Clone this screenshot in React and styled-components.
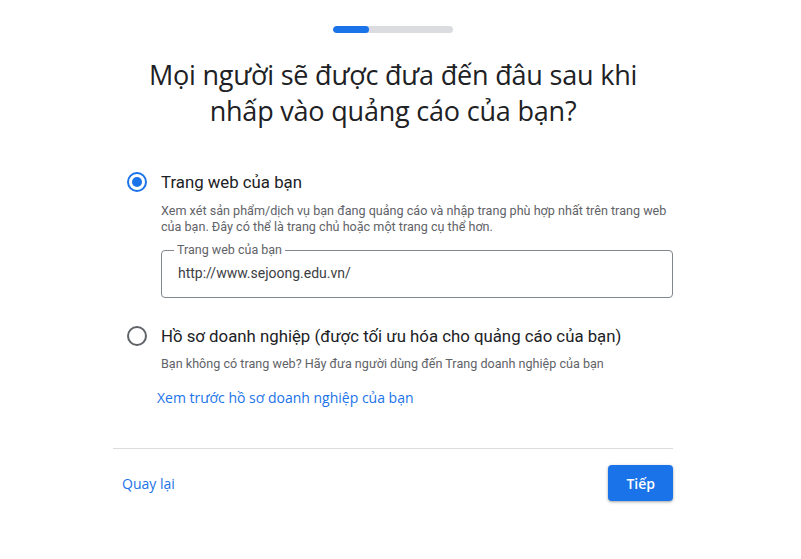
import React, { useState } from "react";
import styled, { createGlobalStyle } from "styled-components";

const GlobalStyle = createGlobalStyle`
  html, body {
    margin: 0;
    padding: 0;
    background: #fff;
  }
  body {
    font-family: Roboto, "Liberation Sans", Arial, sans-serif;
    color: #202124;
  }
`;

const Page = styled.div`
  width: 801px;
  height: 559px;
  display: flex;
  flex-direction: column;
  align-items: flex-start;
  padding-left: 113px;
  box-sizing: border-box;
`;

const Wrap = styled.div`
  width: 560px;
  display: flex;
  flex-direction: column;
`;

const Progress = styled.div`
  align-self: center;
  width: 120px;
  height: 7px;
  border-radius: 4px;
  background: #dadce0;
  margin-top: 26px;
  overflow: hidden;
  div {
    height: 100%;
    background: #1a73e8;
    border-radius: 4px;
  }
`;

const Title = styled.h1`
  margin: 24px 0 0;
  font-family: "Open Sans", Roboto, sans-serif;
  font-weight: 400;
  font-size: 27px;
  line-height: 36px;
  text-align: center;
  color: #202124;
  letter-spacing: -0.2px;
`;

const Options = styled.div`
  margin-top: 41px;
  padding-left: 14px;
  display: flex;
  flex-direction: column;
`;

const Option = styled.label`
  display: grid;
  grid-template-columns: 34px 1fr;
  align-items: center;
  cursor: pointer;
  margin-top: ${(p) => p.$gap || 0}px;
`;

const Radio = styled.span`
  width: 20px;
  height: 20px;
  box-sizing: border-box;
  border-radius: 50%;
  border: 2px solid ${(p) => (p.$on ? "#1a73e8" : "#5f6368")};
  display: flex;
  align-items: center;
  justify-content: center;
  &::after {
    content: "";
    width: 10px;
    height: 10px;
    border-radius: 50%;
    background: ${(p) => (p.$on ? "#1a73e8" : "transparent")};
  }
`;

const OptionLabel = styled.span`
  font-size: 16.8px;
  line-height: 24px;
  color: #202124;
`;

const Body = styled.div`
  padding-left: 34px;
`;

const Hint = styled.p`
  margin: ${(p) => p.$top}px 0 0;
  font-size: 12.6px;
  line-height: 16px;
  color: #5f6368;
`;

const Field = styled.fieldset`
  margin: 9px 0 0;
  padding: 0 16px;
  height: 54px;
  box-sizing: border-box;
  border: 1px solid #80868b;
  border-radius: 4px;
  legend {
    padding: 0 3px;
    margin-left: -4px;
    font-size: 12.5px;
    line-height: 12px;
    color: #5f6368;
  }
  input {
    border: 0;
    outline: 0;
    width: 100%;
    padding: 9px 0 0;
    font-family: Roboto, sans-serif;
    font-size: 14px;
    color: #3c4043;
    background: transparent;
  }
`;

const TextLink = styled.a`
  font-family: "Open Sans", Roboto, sans-serif;
  font-size: 14px;
  font-weight: ${(p) => p.$weight || 400};
  color: #1a73e8;
  text-decoration: none;
  cursor: pointer;
`;

const Preview = styled.div`
  margin-top: 16px;
  padding-left: 30px;
`;

const Divider = styled.hr`
  margin: 41px 0 0;
  border: 0;
  border-top: 1px solid #dadce0;
`;

const Footer = styled.div`
  display: flex;
  justify-content: space-between;
  align-items: center;
  padding: 16px 0 0 9px;
`;

const NextButton = styled.button`
  height: 36px;
  padding: 0 18px;
  border: 0;
  border-radius: 4px;
  background: #1a73e8;
  color: #fff;
  font-family: "Open Sans", Roboto, sans-serif;
  font-weight: 600;
  font-size: 14px;
  box-shadow: 0 1px 2px rgba(60, 64, 67, 0.3), 0 1px 3px 1px rgba(60, 64, 67, 0.15);
  cursor: pointer;
`;

export default function App() {
  const [choice, setChoice] = useState("web");
  const [url, setUrl] = useState("http://www.sejoong.edu.vn/");

  return (
    <>
      <GlobalStyle />
      <Page>
        <Wrap>
          <Progress>
            <div style={{ width: `${(1 / 3.3) * 100}%` }} />
          </Progress>
          <Title>
            Mọi người sẽ được đưa đến đâu sau khi
            <br />
            nhấp vào quảng cáo của bạn?
          </Title>

          <Options>
            <Option onClick={() => setChoice("web")}>
              <Radio $on={choice === "web"} />
              <OptionLabel>Trang web của bạn</OptionLabel>
            </Option>
            <Body>
              <Hint $top={9}>
                Xem xét sản phẩm/dịch vụ bạn đang quảng cáo và nhập trang phù hợp nhất trên trang web
                của bạn. Đây có thể là trang chủ hoặc một trang cụ thể hơn.
              </Hint>
              <Field>
                <legend>Trang web của bạn</legend>
                <input value={url} onChange={(e) => setUrl(e.target.value)} />
              </Field>
            </Body>

            <Option $gap={26} onClick={() => setChoice("profile")}>
              <Radio $on={choice === "profile"} />
              <OptionLabel>Hồ sơ doanh nghiệp (được tối ưu hóa cho quảng cáo của bạn)</OptionLabel>
            </Option>
            <Body>
              <Hint $top={8}>Bạn không có trang web? Hãy đưa người dùng đến Trang doanh nghiệp của bạn</Hint>
            </Body>
            <Preview>
              <TextLink>Xem trước hồ sơ doanh nghiệp của bạn</TextLink>
            </Preview>
          </Options>

          <Divider />
          <Footer>
            <TextLink $weight={500}>Quay lại</TextLink>
            <NextButton>Tiếp</NextButton>
          </Footer>
        </Wrap>
      </Page>
    </>
  );
}
